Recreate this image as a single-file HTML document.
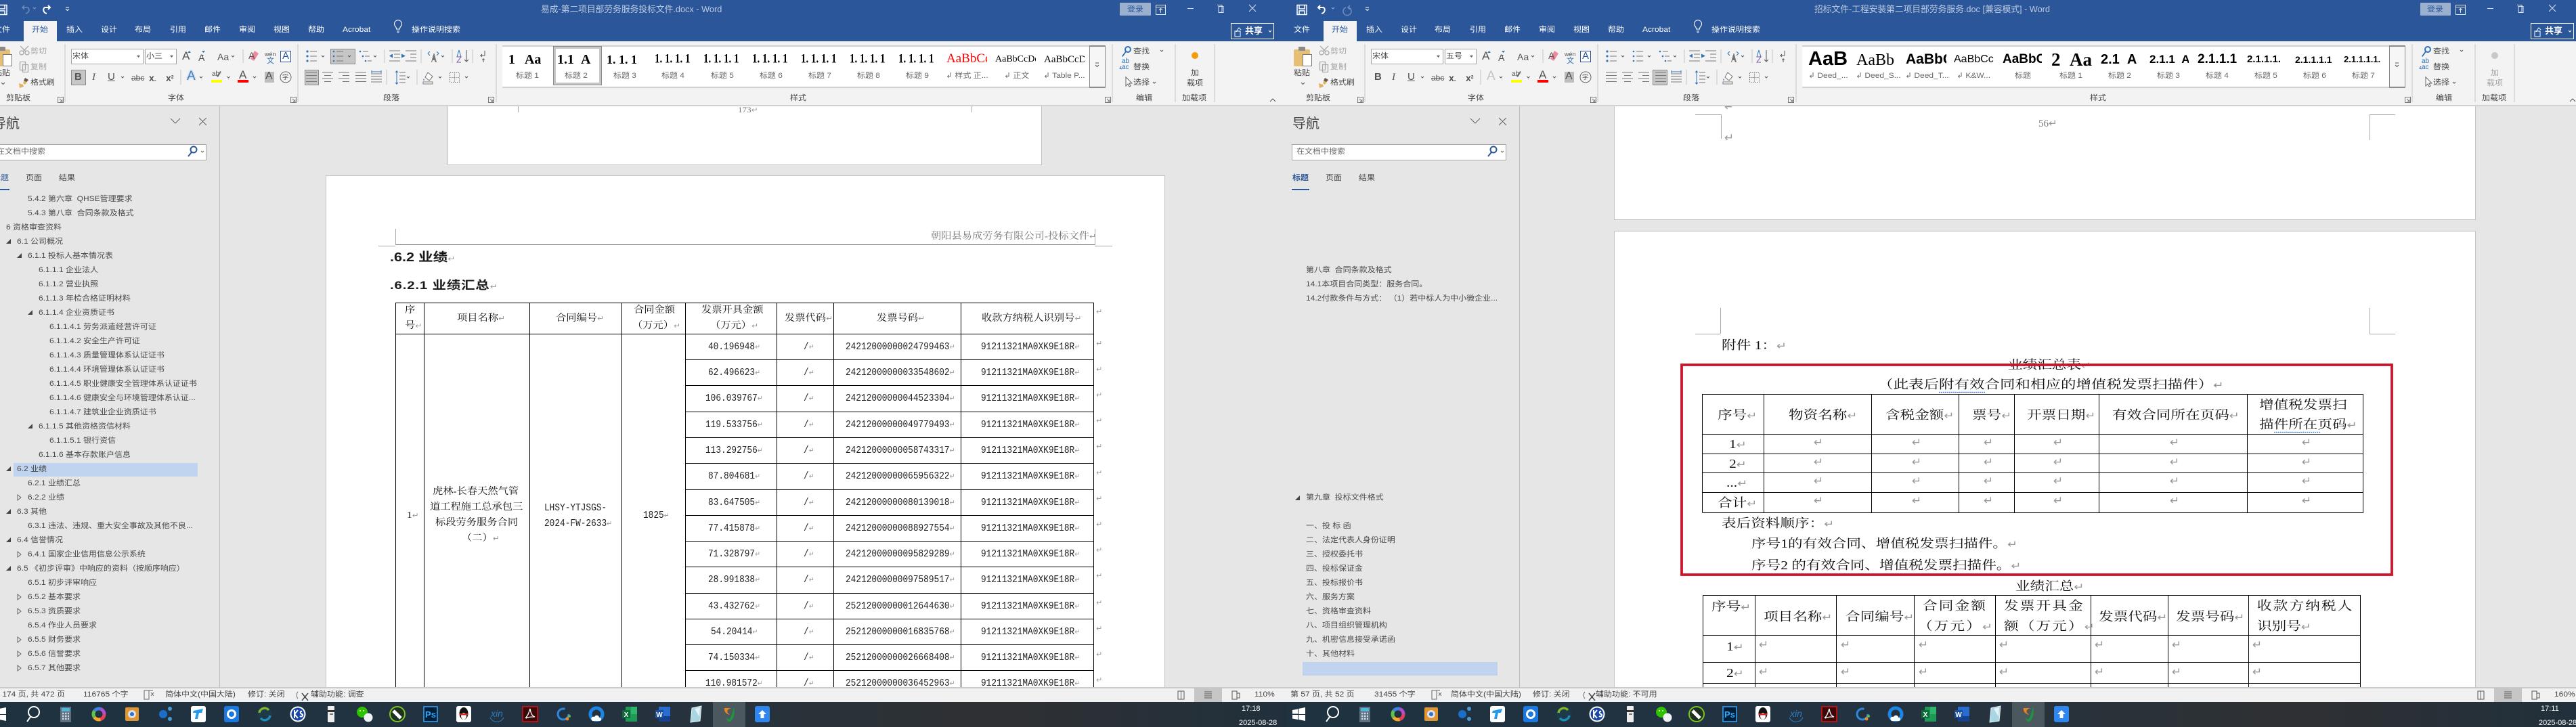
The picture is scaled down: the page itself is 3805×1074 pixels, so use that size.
<!DOCTYPE html>
<html lang="zh"><head><meta charset="utf-8"><title>Word</title>
<style>
html,body{margin:0;padding:0;background:#e6e6e6}
body{width:3805px;height:1074px;overflow:hidden;position:relative}
p{margin:0}
#L,#R{position:absolute;top:0;height:1074px;overflow:hidden;background:#e6e6e6}
#L{left:-20px;width:1920px}
#R{left:1900px;width:1905px}
#LD{position:absolute;left:20px;top:0;width:1900px;height:1074px}
#RD{position:absolute;left:-1900px;top:0;width:3805px;height:1074px}
.a{position:absolute;left:0;top:0;overflow:visible}
.pg{position:absolute;background:#fff;box-shadow:0 0 0 1px #c4c4c4}
.bar{position:absolute;left:0;top:0;width:1920px;height:61px;background:#2b579a}
.rb{position:absolute;left:0;top:61px;width:1920px;height:94px;background:#f3f3f3;border-bottom:2px solid #d2d2d2}
.tab{position:absolute;left:55px;top:31px;width:49px;height:30px;background:#f3f3f3}
.u{position:absolute;font:11px/16px "Liberation Sans","Noto Sans CJK SC",sans-serif;transform:scaleX(1.09);transform-origin:0 0;white-space:nowrap;color:#444}
.w{color:#fff}.dm{color:#a5a5a5}.bl{color:#2b579a}.tt{color:#bccadf}.gy{color:#6a6a6a}
.s13{font-size:13px}
.gl{position:absolute;left:762px;top:67px;width:867px;height:59px;background:#fff;border-top:2px solid #d0d0d0;border-bottom:2px solid #d0d0d0}
.sc{position:absolute;left:1629px;top:67px;width:22px;height:59px;border:1px solid #8a8a8a;border-width:2px 1px;background:#f6f6f6}
.g{position:absolute;top:75px;height:26px;width:60px;overflow:hidden;font:20px/26px "Liberation Serif",serif;color:#000;white-space:nowrap}
.gb{font:bold 21px/26px "Liberation Sans",sans-serif}
.gs{font-size:15px;font-weight:bold;transform:scaleY(1.25);transform-origin:50% 60%}
.box{position:absolute;background:#fff;border:1px solid #a6a6a6;box-sizing:border-box}
.k{position:absolute;font:13px/16px "Liberation Sans","Noto Sans CJK SC",sans-serif;color:#555;white-space:nowrap}
.sel{position:absolute;background:#c6c6c6;box-shadow:inset 0 0 0 1px #8a8a8a}
.st{position:absolute;left:0;top:1015px;width:1920px;height:22px;background:#f1f1f1;border-top:2px solid #cacaca;box-sizing:border-box}
.tk{position:absolute;left:0;top:1037px;width:1920px;height:37px;background:linear-gradient(90deg,#1e3240,#233241 45%,#2a3238 65%,#2f3033 78%,#20303c)}
.n{position:absolute;font:11px/16px "Liberation Sans","Noto Sans CJK SC",sans-serif;transform:scaleX(1.09);transform-origin:0 0;white-space:pre;color:#4a4a4a}
.d{position:absolute;font:14px/20px "Liberation Serif","Noto Serif CJK SC",serif;transform:scaleX(1.09);transform-origin:0 0;white-space:nowrap;color:#111}
.m{position:absolute;font:15px/20px "Liberation Mono",monospace;transform:scaleX(.853);transform-origin:0 0;white-space:nowrap;color:#222}
.e{position:absolute;font:18px/24px "Liberation Serif","Noto Serif CJK SC",serif;transform:scaleX(1.2);transform-origin:0 0;white-space:nowrap;color:#111}
.sp{letter-spacing:1.8px}
em{font:normal 11px "DejaVu Sans",sans-serif;color:#999;letter-spacing:0}
.e em{font-size:15px}
.r{position:absolute;font:normal 11px/20px "DejaVu Sans",sans-serif;color:#999}
.r2{position:absolute;font:normal 17px/20px "DejaVu Sans",sans-serif;color:#999}
.h1{position:absolute;font:bold 18px/24px "Liberation Sans","Noto Sans CJK SC",sans-serif;color:#1a1a1a;white-space:nowrap;transform:scaleX(1.2);transform-origin:0 0}
.ck{font:11px/14px "Liberation Sans","Noto Sans CJK SC",sans-serif;color:#fff;position:absolute;white-space:nowrap}
</style></head><body>
<svg width="0" height="0" style="position:absolute"><defs>
<g id="ri">
<path fill="none" stroke="#c6c6c6" d="M116 65V151M460 65V151M753 65V151M1663 65V151M1756 65V151M1814 65V151M379 73V93M287 103V125M588 73V93M642 73V93M688 73V93M718 73V93M591 103V125M636 103V125"/>
<path fill="none" stroke="#777" d="M105.5 143.5h8v8h-8zM108 146l4 4m0-3v3h-3M449.5 143.5h8v8h-8zM452 146l4 4m0-3v3h-3M741.5 143.5h8v8h-8zM744 146l4 4m0-3v3h-3M1652.5 143.5h8v8h-8zM1655 146l4 4m0-3v3h-3"/>
<path fill="none" stroke="#555" d="M22 122l2.500 2.500 2.500-2.500M362 82l2 2 2-2M495 82l2 2 2-2M534 82l2 2 2-2M572 82l2 2 2-2M672 82l2 2 2-2M199 113l2 2 2-2M315 113l2 2 2-2M355.500 113l2 2 2-2M394 113l2 2 2-2M621 113l2 2 2-2M668 113l2 2 2-2M707 113l2 2 2-2M1734 74l2 2 2-2M1723 121l2 2 2-2M1638 96l2.500 2.500 2.500-2.500M1638 93h5M1896 150l4-4 4 4"/>
<path fill="#555" d="M222 82h5l-2.500 3zM271 82h5l-2.500 3zM317 81h4l-2 2.500z"/>
<rect x="11" y="73" width="24" height="25" rx="2" fill="#e6bf76"/><rect x="18" y="69" width="10" height="6" rx="1" fill="#8a8a8a"/><rect x="24.500" y="80.500" width="13" height="17" fill="#fff" stroke="#777"/>
<g fill="none" stroke="#a9a9a9" stroke-width="1.300"><circle cx="52" cy="78" r="3"/><circle cx="60" cy="78" r="3"/><path d="M50 68l8 8M62 68l-8 8M49.500 91.500h8v12h-8zM53.500 95.500h8v11h-8z"/></g>
<path d="M57 115l5 3-5 7-3-2zM48 123l6 2 1 3-6 2z" fill="#e3b25e"/><path d="M57 115l5 3-3 3-4-2z" fill="#5a5a5a"/>
<path fill="#2f73b8" d="M297 78l2.500-3 2.500 3zM318 75l2.500 3 2.500-3z"/>
<path d="M396 75l6 4-7 11-5-3z" fill="#ea8a9c"/><rect x="434.500" y="75.500" width="15" height="16" fill="#fff" stroke="#2b579a"/>
<g stroke="#777" fill="none"><path d="M478 76h10M478 83h10M478 90h10M517 76h10M517 83h10M517 90h10M556 76h8M559 83h7M563 90h6M595 75h16M602 80h9M602 85h9M595 90h16M619 75h16M626 80h9M626 85h9M619 90h16"/>
<path d="M472 107h16M472 111.500h16M472 116h16M472 120.500h16M496 107h16M499 111.500h10M496 116h16M499 120.500h10M520 107h16M526 111.500h10M520 116h16M526 120.500h10M545 107h16M545 111.500h16M545 116h16M545 120.500h16M568 109h16M568 113h16M568 117h16M568 121h16M610 107h9M610 112h9M610 117h9M610 122h9M729 76h0"/></g>
<g fill="#2f73b8"><circle cx="474" cy="76" r="1.600"/><circle cx="474" cy="83" r="1.600"/><circle cx="474" cy="90" r="1.600"/><circle cx="513" cy="76" r="1.300"/><circle cx="513" cy="83" r="1.300"/><circle cx="513" cy="90" r="1.300"/><circle cx="552" cy="76" r="1.300"/><circle cx="556" cy="83" r="1.300"/><circle cx="560" cy="90" r="1.300"/><path d="M595 82.500l5-3v6zM613 79.500l6 3-6 3zM606 104l2.500 3h-5zM606 125l2.500-3h-5z"/></g>
<path fill="none" stroke="#2f73b8" d="M606 106V123M569 106h14M569 104v4M583 104v4M655 76l-3 3 3 3M665 76l3 3-3 3"/>
<path fill="#777" d="M657 92l3.500-13h1l3.500 13h-2l-1-3h-3l-1 3z"/>
<path fill="none" stroke="#2f73b8" d="M698 74l-3 10h6l-3-10"/><path fill="none" stroke="#7d4fa8" d="M695 84h6l-6 8h6"/><path fill="none" stroke="#555" d="M709 74V91M706 88l3 3 3-3M736 75v7h-6l2-2m-2 2l2 2M732 88h4M734 86v6"/>
<path d="M652 107l7 6-5 6-6-5z" fill="#fff" stroke="#777"/><path d="M646 116c-3 4 3 4 0 0" fill="#5a8fc6"/><rect x="645" y="121" width="14" height="3" fill="#fff" stroke="#777"/>
<rect x="684.500" y="107.500" width="14" height="14" fill="none" stroke="#777" stroke-dasharray="1.500 1.500"/><path stroke="#777" stroke-dasharray="1.500 1.500" d="M691.500 107v14M684 114.500h15"/>
<rect x="332" y="118" width="16" height="4" fill="#ff0"/><rect x="371" y="118" width="16" height="4" fill="#f00"/><path d="M347 106l-5 8-2-1 5-8z" fill="#777"/>
<rect x="411" y="106" width="14" height="16" fill="#bdbdbd"/><circle cx="442" cy="114" r="8" fill="none" stroke="#666"/>
<path fill="none" stroke="#fff" d="M604 39a5.500 5.500 0 1 1 8 0c-1 1-1.500 2-1.500 4h-5c0-2-.500-3-1.500-4zM606 46h4M606.500 48h3"/>
<path fill="none" stroke="#dfe6f1" d="M1727.500 7.500h14v14h-14zM1727 10.500h15M1734.500 19v-6M1732 15l2.500-2.500 2.500 2.500M1774 12.500h9M1818 7.500h7v9h-2M1820 9.500h7v9h-7zM1865 7l10 10M1875 7l-10 10"/>
<rect x="1838.500" y="34.500" width="63" height="23" fill="none" stroke="#fff"/>
<path fill="none" stroke="#fff" d="M1844 46h8v8h-8zM1846 47l4-6 3 3M1894 45l2 2 2-2"/>
<path fill="#2f73b8" d="M1682 76l-5 7 1.500 1 5-7z"/><circle cx="1686" cy="73" r="4" fill="none" stroke="#2f73b8" stroke-width="2"/>
<path fill="#fff" stroke="#666" d="M1683 114v13l3-3 2 4 2-1-2-4h4z"/><path d="M1676 98l-2 3 3 1" fill="none" stroke="#2f73b8"/>
<path fill="none" stroke="#666" d="M272 175l7 7 7-7M314 174l11 11m0-11l-11 11M317 223l2 2 2-2"/>
<circle cx="306" cy="221" r="4.500" fill="none" stroke="#2b579a" stroke-width="2"/><path stroke="#2b579a" stroke-width="2" d="M303 225l-5 6"/>
</g>
<g id="tb">
<g transform="translate(25 18)" fill="#fff"><path d="M-9-6l8-1.500v7h-8zM0-8l10-2v10H0zM-9 1h8v7l-8-1.500zM0 1h10v9L0 8z"/></g>
<g transform="translate(74 18)" fill="none" stroke="#fff" stroke-width="2"><circle cx="2" cy="-3" r="8"/><path d="M-3 4l-5 7"/></g>
<g transform="translate(123 18)"><rect x="-8" y="-11" width="16" height="23" fill="#5d6f80"/><rect x="-6" y="-9" width="12" height="5" fill="#4fb8d8"/><path stroke="#cfd8de" stroke-width="2.500" stroke-dasharray="2.500 1.500" d="M-5-1h10M-5 3h10M-5 7h10"/></g>
<g transform="translate(172 18)" fill="none" stroke-width="5"><circle r="8" stroke="#e6405f" stroke-dasharray="10 40"/><circle r="8" stroke="#f7a823" stroke-dasharray="10 40" stroke-dashoffset="-10"/><circle r="8" stroke="#5fc14a" stroke-dasharray="10 40" stroke-dashoffset="-20"/><circle r="8" stroke="#3f7fe0" stroke-dasharray="10 40" stroke-dashoffset="-30"/><circle r="8" stroke="#b04fd0" stroke-dasharray="10 40" stroke-dashoffset="-40"/></g>
<g transform="translate(221 18)"><rect x="-10" y="-10" width="20" height="20" rx="2" fill="#e5952f"/><circle r="6" fill="#d5e2ee"/><circle r="3" fill="#3d6fc0"/></g>
<g transform="translate(270 18)"><circle cx="-3" r="6" fill="#1c6fc8"/><circle cx="7" cy="-8" r="3" fill="#4a9ad6"/><circle cx="7" cy="7" r="3" fill="#4a9ad6"/></g>
<g transform="translate(319 18)"><rect x="-11" y="-12" width="22" height="24" rx="3" fill="#fff"/><path d="M-7-5l14-3-2 6h-4l-2 9h-4l2-9h-5z" fill="#1f9af0"/></g>
<g transform="translate(368 18)"><rect x="-11" y="-12" width="22" height="24" rx="3" fill="#1a78e0"/><circle r="5.500" fill="none" stroke="#fff" stroke-width="3"/></g>
<g transform="translate(417 18)" fill="none" stroke-width="3.500"><circle r="11" fill="#1e3a48" stroke="none"/><path stroke="#7fb52a" d="M-8-2a8 8 0 0 1 14-4"/><path stroke="#1a8cb8" d="M8 2a8 8 0 0 1-14 4"/></g>
<g transform="translate(466 18)"><circle r="11.500" fill="#fff"/><circle r="9.500" fill="#1a48a8"/><path fill="none" stroke="#fff" stroke-width="2" d="M-5-6v12M-5 0l5-6M-5 0l5 6M6-4c-3-1-3 3 0 4s0 5-3 3"/></g>
<g transform="translate(515 18)"><rect x="-5" y="-12" width="10" height="24" rx="1" fill="#ededed"/><rect x="-5" y="-6" width="10" height="3" fill="#333"/><rect x="-2" y="-1" width="5" height="2" fill="#777"/></g>
<g transform="translate(564 18)"><circle cx="-3" cy="-3" r="8" fill="#2dc100"/><circle cx="6" cy="5" r="6.500" fill="#eef2f4"/><circle cx="-6" cy="-5" r="1" fill="#fff"/><circle cx="-1" cy="-5" r="1" fill="#fff"/></g>
<g transform="translate(613 18)"><circle r="11" fill="#1f2f22" stroke="#7ac520" stroke-width="2"/><path d="M-6-5l11 11" stroke="#fff" stroke-width="5"/></g>
<g transform="translate(662 18)"><rect x="-10" y="-11" width="20" height="22" fill="#001e36" stroke="#31a8ff" stroke-width="1.500"/><text x="0" y="5" text-anchor="middle" font-family="Liberation Sans" font-weight="bold" font-size="13" fill="#31a8ff">Ps</text></g>
<g transform="translate(711 18)"><rect x="-11" y="-12" width="22" height="24" rx="3" fill="#fff"/><ellipse cy="-1" rx="6.500" ry="9" fill="#111"/><ellipse cy="3" rx="4" ry="5" fill="#fff"/><rect x="-6" y="-1" width="12" height="2.500" fill="#d8221c"/></g>
<g transform="translate(760 18)"><text x="0" y="4" text-anchor="middle" font-family="Liberation Sans" font-style="italic" font-size="14" fill="#2d7dc0">xin</text><path d="M-10 5a11 11 0 0 0 20 0" fill="none" stroke="#2d7dc0"/></g>
<g transform="translate(809 18)"><rect x="-11" y="-11" width="22" height="22" fill="#3a0a0a" stroke="#e01010" stroke-width="1.500"/><path d="M0-8c-2 6-3 10-7 14M0-8c1 7 3 11 7 12-5 0-9 0-13 2" fill="none" stroke="#fff" stroke-width="1.300"/></g>
<g transform="translate(858 18)"><circle r="8" fill="none" stroke="#2a8ae0" stroke-width="3" stroke-dasharray="40 10"/><circle cx="6" cy="7" r="2.500" fill="#e8862a"/><circle cx="9" cy="3" r="2" fill="#5fb84a"/></g>
<g transform="translate(907 18)"><circle r="9" fill="none" stroke="#1a86e8" stroke-width="5"/><path d="M-6 10c-4-4 0-7 3-6 2-4 7-2 7 1 4 0 4 5 1 5z" fill="#fff"/></g>
<g transform="translate(956 18)"><rect x="-6" y="-11" width="17" height="22" fill="#1f9a54"/><rect x="2" y="-11" width="9" height="11" fill="#30b56d"/><rect x="-11" y="-6" width="12" height="12" fill="#0e6b3a"/><text x="-5" y="4" text-anchor="middle" font-family="Liberation Sans" font-weight="bold" font-size="10" fill="#fff">X</text></g>
<g transform="translate(1005 18)"><rect x="-6" y="-11" width="17" height="22" fill="#2b6cd0"/><rect x="-6" y="3" width="17" height="8" fill="#16418f"/><rect x="-11" y="-6" width="12" height="12" fill="#1a4ea0"/><text x="-5" y="4" text-anchor="middle" font-family="Liberation Sans" font-weight="bold" font-size="10" fill="#fff">W</text></g>
<g transform="translate(1054 18)"><path d="M-6-9L8-12 6 10-8 12z" fill="#a9d6e3" stroke="#e8f4f7"/><path d="M-2-8L6-10 5 4z" fill="#e5f2f6"/></g>
<g transform="translate(1103 18)"><rect x="-24" y="-18" width="48" height="37" fill="#4b595f"/><path d="M-7-9h10c-4 1-7 4-5 7l3 3c-5-1-9-5-8-10z" fill="#e8841f"/><path d="M7-10c2 8 0 17-5 21-4 1-6-3-6-6 2 3 5 3 6 0 2-4 3-9 5-15z" fill="#1f9440"/></g>
<g transform="translate(1152 18)"><rect x="-11" y="-12" width="22" height="24" rx="3" fill="#2f86ee"/><path d="M0-6l6 6h-3.500v6h-5v-6H-6z" fill="#fff"/></g>
</g>
</defs></svg>

<div id="L">
<div id="LD">
<div class="pg" style="left:662px;top:156px;width:876px;height:87px"></div>
<div class="pg" style="left:482px;top:260px;width:1238px;height:760px"></div>
<svg class="a" width="1900" height="1074" shape-rendering="crispEdges"><path fill="none" stroke="#a8a8a8" d="M765.500 156V166M1435.500 156V166M584.500 338V362M559 363.500H584M1617.500 338V362M1617 363.500H1643"/><path fill="none" stroke="#7f7f7f" d="M585 361.500H1617"/>
<path fill="none" stroke="#000" d="M584.500 447.500H1615.500M584.500 493.500H1615.500M1012 531.500H1615.500M1012 569.500H1615.500M1012 608.500H1615.500M1012 646.500H1615.500M1012 684.500H1615.500M1012 723.500H1615.500M1012 761.500H1615.500M1012 799.500H1615.500M1012 837.500H1615.500M1012 876.500H1615.500M1012 914.500H1615.500M1012 952.500H1615.500M1012 990.500H1615.500M584.500 447V1015M626.500 447V1015M782.500 447V1015M918.500 447V1015M1012.500 447V1015M1147.500 447V1015M1231.500 447V1015M1419.500 447V1015M1615.500 447V1015"/></svg>
<p class="d" style="left:1090px;top:152px;color:#777;font-size:12px">173<em>↵</em></p>
<p class="d" style="left:1375px;top:340px;color:#777">朝阳县易成劳务有限公司-投标文件<em>↵</em></p>
<p class="h1" style="left:576px;top:368px">.6.2 业绩<em>↵</em></p>
<p class="h1" style="left:576px;top:410px;font-size:17px;letter-spacing:.7px">.6.2.1 业绩汇总<em>↵</em></p>
<p class="d" style="left:598px;top:449px">序</p><p class="d" style="left:598px;top:472px">号<em>↵</em></p>
<p class="d" style="left:675px;top:461px">项目名称<em>↵</em></p><p class="d" style="left:821px;top:461px">合同编号<em>↵</em></p>
<p class="d" style="left:936px;top:449px">合同金额</p><p class="d" style="left:934px;top:472px">（万元）<em>↵</em></p>
<p class="d" style="left:1036px;top:449px">发票开具金额</p><p class="d" style="left:1049px;top:472px">（万元）<em>↵</em></p>
<p class="d" style="left:1159px;top:461px">发票代码<em>↵</em></p><p class="d" style="left:1295px;top:461px">发票号码<em>↵</em></p><p class="d" style="left:1450px;top:461px">收款方纳税人识别号<em>↵</em></p>
<p class="d" style="left:601px;top:752px">1<em>↵</em></p>
<p class="d" style="left:639px;top:717px">虎林-长春天然气管</p><p class="d" style="left:635px;top:740px">道工程施工总承包三</p><p class="d" style="left:643px;top:763px">标段劳务服务合同</p><p class="d" style="left:682px;top:786px">（二）<em>↵</em></p>
<p class="m" style="left:804px;top:741px">LHSY-YTJSGS-</p><p class="m" style="left:804px;top:764px">2024-FW-2633<em>↵</em></p>
<p class="m" style="left:950px;top:752px">1825<em>↵</em></p>
<p class="m" style="left:1046px;top:503px">40.196948<em>↵</em></p><p class="m" style="left:1187px;top:503px">/<em>↵</em></p><p class="m" style="left:1249px;top:503px">24212000000024799463<em>↵</em></p><p class="m" style="left:1449px;top:503px">91211321MA0XK9E18R<em>↵</em></p>
<p class="m" style="left:1046px;top:541px">62.496623<em>↵</em></p><p class="m" style="left:1187px;top:541px">/<em>↵</em></p><p class="m" style="left:1249px;top:541px">24212000000033548602<em>↵</em></p><p class="m" style="left:1449px;top:541px">91211321MA0XK9E18R<em>↵</em></p>
<p class="m" style="left:1042px;top:579px">106.039767<em>↵</em></p><p class="m" style="left:1187px;top:579px">/<em>↵</em></p><p class="m" style="left:1249px;top:579px">24212000000044523304<em>↵</em></p><p class="m" style="left:1449px;top:579px">91211321MA0XK9E18R<em>↵</em></p>
<p class="m" style="left:1042px;top:618px">119.533756<em>↵</em></p><p class="m" style="left:1187px;top:618px">/<em>↵</em></p><p class="m" style="left:1249px;top:618px">24212000000049779493<em>↵</em></p><p class="m" style="left:1449px;top:618px">91211321MA0XK9E18R<em>↵</em></p>
<p class="m" style="left:1042px;top:656px">113.292756<em>↵</em></p><p class="m" style="left:1187px;top:656px">/<em>↵</em></p><p class="m" style="left:1249px;top:656px">24212000000058743317<em>↵</em></p><p class="m" style="left:1449px;top:656px">91211321MA0XK9E18R<em>↵</em></p>
<p class="m" style="left:1046px;top:694px">87.804681<em>↵</em></p><p class="m" style="left:1187px;top:694px">/<em>↵</em></p><p class="m" style="left:1249px;top:694px">24212000000065956322<em>↵</em></p><p class="m" style="left:1449px;top:694px">91211321MA0XK9E18R<em>↵</em></p>
<p class="m" style="left:1046px;top:733px">83.647505<em>↵</em></p><p class="m" style="left:1187px;top:733px">/<em>↵</em></p><p class="m" style="left:1249px;top:733px">24212000000080139018<em>↵</em></p><p class="m" style="left:1449px;top:733px">91211321MA0XK9E18R<em>↵</em></p>
<p class="m" style="left:1046px;top:771px">77.415878<em>↵</em></p><p class="m" style="left:1187px;top:771px">/<em>↵</em></p><p class="m" style="left:1249px;top:771px">24212000000088927554<em>↵</em></p><p class="m" style="left:1449px;top:771px">91211321MA0XK9E18R<em>↵</em></p>
<p class="m" style="left:1046px;top:809px">71.328797<em>↵</em></p><p class="m" style="left:1187px;top:809px">/<em>↵</em></p><p class="m" style="left:1249px;top:809px">24212000000095829289<em>↵</em></p><p class="m" style="left:1449px;top:809px">91211321MA0XK9E18R<em>↵</em></p>
<p class="m" style="left:1046px;top:847px">28.991838<em>↵</em></p><p class="m" style="left:1187px;top:847px">/<em>↵</em></p><p class="m" style="left:1249px;top:847px">24212000000097589517<em>↵</em></p><p class="m" style="left:1449px;top:847px">91211321MA0XK9E18R<em>↵</em></p>
<p class="m" style="left:1046px;top:886px">43.432762<em>↵</em></p><p class="m" style="left:1187px;top:886px">/<em>↵</em></p><p class="m" style="left:1249px;top:886px">25212000000012644630<em>↵</em></p><p class="m" style="left:1449px;top:886px">91211321MA0XK9E18R<em>↵</em></p>
<p class="m" style="left:1050px;top:924px">54.20414<em>↵</em></p><p class="m" style="left:1187px;top:924px">/<em>↵</em></p><p class="m" style="left:1249px;top:924px">25212000000016835768<em>↵</em></p><p class="m" style="left:1449px;top:924px">91211321MA0XK9E18R<em>↵</em></p>
<p class="m" style="left:1046px;top:962px">74.150334<em>↵</em></p><p class="m" style="left:1187px;top:962px">/<em>↵</em></p><p class="m" style="left:1249px;top:962px">25212000000026668408<em>↵</em></p><p class="m" style="left:1449px;top:962px">91211321MA0XK9E18R<em>↵</em></p>
<p class="m" style="left:1042px;top:1000px">110.981572<em>↵</em></p><p class="m" style="left:1187px;top:1000px">/<em>↵</em></p><p class="m" style="left:1249px;top:1000px">25212000000036452963<em>↵</em></p><p class="m" style="left:1449px;top:1000px">91211321MA0XK9E18R<em>↵</em></p>
<p class="r" style="left:1619px;top:451px">↵</p><p class="r" style="left:1619px;top:498px">↵</p><p class="r" style="left:1619px;top:536px">↵</p><p class="r" style="left:1619px;top:574px">↵</p><p class="r" style="left:1619px;top:612px">↵</p><p class="r" style="left:1619px;top:650px">↵</p><p class="r" style="left:1619px;top:689px">↵</p><p class="r" style="left:1619px;top:727px">↵</p><p class="r" style="left:1619px;top:765px">↵</p><p class="r" style="left:1619px;top:803px">↵</p><p class="r" style="left:1619px;top:841px">↵</p><p class="r" style="left:1619px;top:881px">↵</p><p class="r" style="left:1619px;top:919px">↵</p><p class="r" style="left:1619px;top:957px">↵</p><p class="r" style="left:1619px;top:995px">↵</p>
</div>

<div style="position:absolute;left:0;top:156px;width:344px;height:859px;background:#e6e6e6;border-right:1px solid #bdbdbd"></div>
<div class="box" style="left:8px;top:213px;width:317px;height:24px;border-width:1.500px"></div>
<div style="position:absolute;left:8px;top:279px;width:26px;height:2px;background:#2b579a"></div>
<p class="u" style="left:9px;top:171px;font-size:20px;line-height:24px;transform:scaleX(1)">导航</p>
<p class="u gy" style="left:15px;top:216px">在文档中搜索</p>
<p class="u bl" style="left:9px;top:255px">标题</p><p class="u" style="left:58px;top:255px">页面</p><p class="u" style="left:107px;top:255px">结果</p>
<div id="LN" style="position:absolute;left:20px;top:0">
<div style="position:absolute;left:20px;top:684px;width:272px;height:20px;background:#c0d4f0"></div>
<svg class="a" width="340" height="1074"><path fill="#444" d="M9 360h7v-7zM9 696h7v-7zM9 759h7v-7zM9 801h7v-7zM9 843h7v-7zM25 381h7v-7zM41 465h7v-7zM41 633h7v-7z"/><path fill="none" stroke="#666" d="M26 731v8l5-4zM26 815v8l5-4zM26 878v8l5-4zM26 899v8l5-4zM26 941v8l5-4zM26 962v8l5-4zM26 983v8l5-4z"/></svg>
<p class="n" style="left:41px;top:286px">5.4.2 第六章  QHSE管理要求</p>
<p class="n" style="left:41px;top:307px">5.4.3 第八章  合同条款及格式</p>
<p class="n" style="left:9px;top:328px">6 资格审查资料</p>
<p class="n" style="left:25px;top:349px">6.1 公司概况</p>
<p class="n" style="left:41px;top:370px">6.1.1 投标人基本情况表</p>
<p class="n" style="left:57px;top:391px">6.1.1.1 企业法人</p>
<p class="n" style="left:57px;top:412px">6.1.1.2 营业执照</p>
<p class="n" style="left:57px;top:433px">6.1.1.3 年检合格证明材料</p>
<p class="n" style="left:57px;top:454px">6.1.1.4 企业资质证书</p>
<p class="n" style="left:73px;top:475px">6.1.1.4.1 劳务派遣经营许可证</p>
<p class="n" style="left:73px;top:496px">6.1.1.4.2 安全生产许可证</p>
<p class="n" style="left:73px;top:517px">6.1.1.4.3 质量管理体系认证证书</p>
<p class="n" style="left:73px;top:538px">6.1.1.4.4 环境管理体系认证证书</p>
<p class="n" style="left:73px;top:559px">6.1.1.4.5 职业健康安全管理体系认证证书</p>
<p class="n" style="left:73px;top:580px">6.1.1.4.6 健康安全与环境管理体系认证...</p>
<p class="n" style="left:73px;top:601px">6.1.1.4.7 建筑业企业资质证书</p>
<p class="n" style="left:57px;top:622px">6.1.1.5 其他资格资信材料</p>
<p class="n" style="left:73px;top:643px">6.1.1.5.1 银行资信</p>
<p class="n" style="left:57px;top:664px">6.1.1.6 基本存款账户信息</p>
<p class="n" style="left:25px;top:685px">6.2 业绩</p>
<p class="n" style="left:41px;top:706px">6.2.1 业绩汇总</p>
<p class="n" style="left:41px;top:727px">6.2.2 业绩</p>
<p class="n" style="left:25px;top:748px">6.3 其他</p>
<p class="n" style="left:41px;top:769px">6.3.1 违法、违规、重大安全事故及其他不良...</p>
<p class="n" style="left:25px;top:790px">6.4 信誉情况</p>
<p class="n" style="left:41px;top:811px">6.4.1 国家企业信用信息公示系统</p>
<p class="n" style="left:25px;top:832px">6.5 《初步评审》中响应的资料（按顺序响应）</p>
<p class="n" style="left:41px;top:853px">6.5.1 初步评审响应</p>
<p class="n" style="left:41px;top:874px">6.5.2 基本要求</p>
<p class="n" style="left:41px;top:895px">6.5.3 资质要求</p>
<p class="n" style="left:41px;top:916px">6.5.4 作业人员要求</p>
<p class="n" style="left:41px;top:937px">6.5.5 财务要求</p>
<p class="n" style="left:41px;top:958px">6.5.6 信誉要求</p>
<p class="n" style="left:41px;top:979px">6.5.7 其他要求</p>
</div>

<div class="bar"></div><div class="rb"></div><div class="tab"></div>
<div class="gl"></div><div class="sc"></div>
<div class="sel" style="left:125px;top:103px;width:22px;height:23px"></div>
<div class="sel" style="left:470px;top:103px;width:21px;height:23px"></div>
<div class="sel" style="left:508px;top:72px;width:37px;height:23px"></div>
<div style="position:absolute;left:837px;top:68px;width:70px;height:56px;background:#fff;border:1px solid #8a8a8a;box-shadow:inset 0 0 0 3px #c6c6c6"></div>
<svg class="a" width="1920" height="155"><use href="#ri"/>
<circle cx="1785" cy="82" r="5" fill="#f59a0a"/>
<path fill="none" stroke="#fff" stroke-width="1.500" d="M16 7.500h14v14H16zM19 8v5h8V8M19 21v-5h8v5"/>
<path fill="none" stroke="#6f8ebb" stroke-width="1.500" d="M56 8l-3 3 3 3M53 11h7c4 0 4 8-2 9M69 11l2 2 2-2"/><path fill="none" stroke="#fff" stroke-width="2" d="M91 8l3 3-3 3M94 11h-7c-4 0-4 8 2 9"/><path fill="none" stroke="#fff" d="M117 11h5M117 13l2.500 2.500 2.500-2.500"/></svg>
<p class="u tt s13" style="left:819px;top:6px;transform:scaleX(.98)">易成-第二项目部劳务服务投标文件.docx  -  Word</p>
<p class="u w" style="left:11px;top:36px">文件</p><p class="u bl" style="left:67px;top:36px">开始</p><p class="u w" style="left:118px;top:36px">插入</p><p class="u w" style="left:169px;top:36px">设计</p><p class="u w" style="left:219px;top:36px">布局</p><p class="u w" style="left:271px;top:36px">引用</p><p class="u w" style="left:322px;top:36px">邮件</p><p class="u w" style="left:373px;top:36px">审阅</p><p class="u w" style="left:424px;top:36px">视图</p><p class="u w" style="left:475px;top:36px">帮助</p><p class="u w" style="left:526px;top:36px">Acrobat</p><p class="u w" style="left:628px;top:36px">操作说明搜索</p>
<div style="position:absolute;left:1674px;top:4px;width:46px;height:19px;background:#9bb0cf;border-radius:1px"></div><p class="u bl" style="left:1685px;top:6px">登录</p>
<p class="u w s13" style="left:1859px;top:38px;font-weight:bold;transform:scaleX(1)">共享</p>
<p class="u" style="left:11px;top:100px">粘贴</p><p class="u dm" style="left:65px;top:68px">剪切</p><p class="u dm" style="left:65px;top:91px">复制</p><p class="u" style="left:65px;top:114px">格式刷</p><p class="u" style="left:29px;top:137px">剪贴板</p>
<div class="box" style="left:125px;top:72px;width:107px;height:23px"></div><div class="box" style="left:234px;top:72px;width:47px;height:23px"></div>
<svg class="a" width="300" height="100"><path fill="#555" d="M222 82h5l-2.500 3zM271 82h5l-2.500 3z"/></svg>
<p class="u" style="left:127px;top:75px">宋体</p><p class="u" style="left:236px;top:75px">小三</p>
<p class="k" style="left:289px;top:75px;font-size:17px">A</p><p class="k" style="left:313px;top:77px;font-size:14px">A</p><p class="k" style="left:341px;top:76px;font-size:14px">Aa</p><p class="k" style="left:387px;top:74px;font-size:14px">A</p><p class="k" style="left:411px;top:72px;font-size:9px">wén</p><p class="k" style="left:414px;top:82px;font-size:11px;color:#2b6fb3">文</p><p class="k" style="left:437px;top:75px;font-size:15px;color:#2b579a">A</p>
<p class="k" style="left:130px;top:106px;font-size:15px;font-weight:bold">B</p><p class="k" style="left:156px;top:106px;font:italic 15px/16px 'Liberation Serif',serif">I</p><p class="k" style="left:179px;top:106px;font-size:15px;text-decoration:underline">U</p><p class="k" style="left:214px;top:107px;font-size:12px;text-decoration:line-through">abc</p><p class="k" style="left:240px;top:107px;font-size:14px;font-weight:bold">x<span style="font-size:7px">₂</span></p><p class="k" style="left:265px;top:107px;font-size:14px;font-weight:bold">x<span style="font-size:7px;vertical-align:4px">2</span></p>
<p class="k" style="left:296px;top:105px;font-size:19px;color:#4a7ebb;text-shadow:0 0 3px #9cc0e8">A</p><p class="k" style="left:333px;top:102px;font-size:10px">ab</p><p class="k" style="left:373px;top:103px;font-size:17px">A</p><p class="k" style="left:412px;top:105px;font-size:16px">A</p><p class="k" style="left:437px;top:106px;font-size:9px">字</p>
<p class="u" style="left:268px;top:137px">字体</p><p class="u" style="left:586px;top:137px">段落</p><p class="u" style="left:1187px;top:137px">样式</p><p class="u" style="left:1698px;top:137px">编辑</p><p class="u" style="left:1766px;top:137px">加载项</p>
<p class="g" style="left:771px;font-weight:bold">1 &nbsp; Aa</p><p class="g" style="left:843px;font-weight:bold">1.1 &nbsp;A</p><p class="g" style="left:916px;font-size:18px;font-weight:bold">1. 1. 1</p>
<p class="g gs" style="left:987px">1. 1. 1. 1</p><p class="g gs" style="left:1059px">1. 1. 1. 1</p><p class="g gs" style="left:1131px">1. 1. 1. 1</p><p class="g gs" style="left:1203px">1. 1. 1. 1</p><p class="g gs" style="left:1275px">1. 1. 1. 1</p><p class="g gs" style="left:1347px">1. 1. 1. 1</p>
<p class="g" style="left:1418px;color:#f00;font-size:19px;top:74px">AaBbCc</p><p class="g" style="left:1490px;font-size:14px">AaBbCcDdE</p><p class="g" style="left:1562px;font-size:15px">AaBbCcDd</p>
<p class="u gy" style="left:782px;top:104px">标题 1</p><p class="u gy" style="left:854px;top:104px">标题 2</p><p class="u gy" style="left:926px;top:104px">标题 3</p><p class="u gy" style="left:997px;top:104px">标题 4</p><p class="u gy" style="left:1070px;top:104px">标题 5</p><p class="u gy" style="left:1142px;top:104px">标题 6</p><p class="u gy" style="left:1214px;top:104px">标题 7</p><p class="u gy" style="left:1286px;top:104px">标题 8</p><p class="u gy" style="left:1358px;top:104px">标题 9</p><p class="u gy" style="left:1417px;top:104px">↲ 样式 正...</p><p class="u gy" style="left:1503px;top:104px">↲ 正文</p><p class="u gy" style="left:1561px;top:104px">↲ Table P...</p>
<p class="u" style="left:1694px;top:68px">查找</p><p class="u" style="left:1694px;top:91px">替换</p><p class="u" style="left:1694px;top:114px">选择</p>
<p class="k" style="left:1677px;top:86px;font-size:10px;line-height:9px;color:#2b6fb3">ab<br>ac</p>
<p class="u" style="left:1779px;top:100px">加</p><p class="u" style="left:1773px;top:115px">载项</p>

<div class="st"></div>
<p class="u" style="left:8px;top:1018px">第 174 页, 共 472 页</p><p class="u" style="left:143px;top:1018px">116765 个字</p><p class="u" style="left:264px;top:1018px">简体中文(中国大陆)</p><p class="u" style="left:386px;top:1018px">修订: 关闭</p><p class="u" style="left:479px;top:1018px">辅助功能: 调查</p>
<svg class="a" width="1920" height="1074"><path fill="none" stroke="#666" d="M233 1020h7v13h-7zM240 1020h6M243 1023l4 5m0-5l-4 5M460 1022a8 8 0 0 0 0 10"/><path stroke="#444" stroke-width="1.500" d="M466 1024l9 11m0-11l-9 11"/><rect x="1784" y="1016" width="41" height="21" fill="#c6c6c6"/><path fill="none" stroke="#555" d="M1760 1021h9v12h-9zM1764.500 1021v12M1799 1022h11M1799 1025h11M1799 1028h11M1799 1031h11M1840 1021h7v12h-7zM1847 1024h4v7h-4"/></svg>
<p class="u" style="left:1873px;top:1018px">110%</p>
<div class="tk"></div>
<svg class="a" style="left:-6px;top:1037px" width="1300" height="37"><use href="#tb"/></svg>
<p class="ck" style="left:1854px;top:1040px">17:18</p><p class="ck" style="left:1850px;top:1061px">2025-08-28</p>
</div>

<div id="R">
<div id="RD">
<div class="pg" style="left:2385px;top:156px;width:1271px;height:168px"></div>
<div class="pg" style="left:2385px;top:342px;width:1271px;height:680px"></div>
<svg class="a" width="3805" height="1074" shape-rendering="crispEdges"><path fill="none" stroke="#a8a8a8" d="M2504 169.500H2542M2542.500 169V205M3500.500 169V207M3500 169.500H3538M2504 493.500H2541M2541.500 455V493M3500.500 455V493M3500 493.500H3538"/>
<path fill="none" stroke="#000" d="M2514.500 582.500H3491M2514.500 641.500H3491M2514.500 670.500H3491M2514.500 698.500H3491M2514.500 727.500H3491M2514.500 757.500H3491M2514.500 582V757M2605.500 582V757M2764.500 582V757M2893.500 582V757M2975.500 582V757M3100.500 582V757M3319.500 582V757M3490.500 582V757M2515 879.500H3486M2515 938.500H3486M2515 978.500H3486M2515 1009.500H3486M2515.500 879V1015M2592.500 879V1015M2712.500 879V1015M2827.500 879V1015M2947.500 879V1015M3088.500 879V1015M3202.500 879V1015M3321.500 879V1015M3486.500 879V1015"/></svg>
<p class="r2" style="left:2547px;top:148px">↵</p><p class="r2" style="left:2547px;top:194px">↵</p>
<p class="e" style="left:3011px;top:171px;color:#777;font-size:15px;transform:scaleX(1)">56<em>↵</em></p>
<p class="e" style="left:2543px;top:498px">附件 1：<em>↵</em></p>
<p class="e" style="left:2966px;top:527px">业绩汇总表<em>↵</em></p>
<p class="e" style="left:2774px;top:556px;transform:scaleX(1.25)">（此表后附有效合同和相应的增值税发票扫描件）<em>↵</em></p>
<p class="e" style="left:2537px;top:601px">序号<em>↵</em></p><p class="e" style="left:2642px;top:601px">物资名称<em>↵</em></p><p class="e" style="left:2785px;top:601px">含税金额<em>↵</em></p><p class="e" style="left:2913px;top:601px">票号<em>↵</em></p><p class="e" style="left:2994px;top:601px">开票日期<em>↵</em></p><p class="e" style="left:3120px;top:601px">有效合同所在页码<em>↵</em></p><p class="e" style="left:3337px;top:586px">增值税发票扫</p><p class="e" style="left:3337px;top:615px">描件所在页码<em>↵</em></p>
<p class="e" style="left:2554px;top:644px">1<em>↵</em></p><p class="e" style="left:2554px;top:673px">2<em>↵</em></p><p class="e" style="left:2550px;top:701px">...<em>↵</em></p><p class="e" style="left:2537px;top:731px">合计<em>↵</em></p>
<p class="r2" style="left:2679px;top:644px">↵</p><p class="r2" style="left:2824px;top:644px">↵</p><p class="r2" style="left:2930px;top:644px">↵</p><p class="r2" style="left:3033px;top:644px">↵</p><p class="r2" style="left:3205px;top:644px">↵</p><p class="r2" style="left:3400px;top:644px">↵</p>
<p class="r2" style="left:2679px;top:673px">↵</p><p class="r2" style="left:2824px;top:673px">↵</p><p class="r2" style="left:2930px;top:673px">↵</p><p class="r2" style="left:3033px;top:673px">↵</p><p class="r2" style="left:3205px;top:673px">↵</p><p class="r2" style="left:3400px;top:673px">↵</p>
<p class="r2" style="left:2679px;top:701px">↵</p><p class="r2" style="left:2824px;top:701px">↵</p><p class="r2" style="left:2930px;top:701px">↵</p><p class="r2" style="left:3033px;top:701px">↵</p><p class="r2" style="left:3205px;top:701px">↵</p><p class="r2" style="left:3400px;top:701px">↵</p>
<p class="r2" style="left:2679px;top:730px">↵</p><p class="r2" style="left:2824px;top:730px">↵</p><p class="r2" style="left:2930px;top:730px">↵</p><p class="r2" style="left:3033px;top:730px">↵</p><p class="r2" style="left:3205px;top:730px">↵</p><p class="r2" style="left:3400px;top:730px">↵</p>
<p class="e" style="left:2543px;top:761px">表后资料顺序：<em>↵</em></p>
<p class="e" style="left:2587px;top:791px">序号1的有效合同、增值税发票扫描件。<em>↵</em></p>
<p class="e" style="left:2587px;top:823px">序号2 的有效合同、增值税发票扫描件。<em>↵</em></p>
<svg class="a" width="3805" height="1074"><path fill="none" stroke="#2a6fd6" stroke-width="1.200" stroke-dasharray="2 1" d="M2864 579.500H2932M3359 638.500H3427"/><rect x="2484" y="539" width="1049" height="310" fill="none" stroke="#cc1528" stroke-width="3.800"/></svg>
<p class="e" style="left:2977px;top:854px">业绩汇总<em>↵</em></p>
<p class="e" style="left:2528px;top:884px">序号<em>↵</em></p><p class="e" style="left:2605px;top:899px">项目名称<em>↵</em></p><p class="e" style="left:2726px;top:899px">合同编号<em>↵</em></p><p class="e sp" style="left:2840px;top:883px">合同金额</p><p class="e sp" style="left:2833px;top:913px">（万元）<em>↵</em></p><p class="e sp" style="left:2960px;top:883px">发票开具金</p><p class="e sp" style="left:2960px;top:913px">额（万元）<em>↵</em></p><p class="e" style="left:3100px;top:899px">发票代码<em>↵</em></p><p class="e" style="left:3214px;top:899px">发票号码<em>↵</em></p><p class="e sp" style="left:3334px;top:883px">收款方纳税人</p><p class="e" style="left:3334px;top:913px">识别号<em>↵</em></p>
<p class="e" style="left:2550px;top:943px">1<em>↵</em></p><p class="e" style="left:2550px;top:982px">2<em>↵</em></p>
<p class="r2" style="left:2598px;top:943px">↵</p><p class="r2" style="left:2719px;top:943px">↵</p><p class="r2" style="left:2834px;top:943px">↵</p><p class="r2" style="left:2953px;top:943px">↵</p><p class="r2" style="left:3094px;top:943px">↵</p><p class="r2" style="left:3208px;top:943px">↵</p><p class="r2" style="left:3327px;top:943px">↵</p>
<p class="r2" style="left:2598px;top:983px">↵</p><p class="r2" style="left:2719px;top:983px">↵</p><p class="r2" style="left:2834px;top:983px">↵</p><p class="r2" style="left:2953px;top:983px">↵</p><p class="r2" style="left:3094px;top:983px">↵</p><p class="r2" style="left:3208px;top:983px">↵</p><p class="r2" style="left:3327px;top:983px">↵</p>
</div>

<div style="position:absolute;left:0;top:156px;width:344px;height:859px;background:#e6e6e6;border-right:1px solid #bdbdbd"></div>
<div class="box" style="left:8px;top:213px;width:317px;height:24px;border-width:1.500px"></div>
<div style="position:absolute;left:8px;top:279px;width:26px;height:2px;background:#2b579a"></div>
<p class="u" style="left:9px;top:171px;font-size:20px;line-height:24px;transform:scaleX(1)">导航</p>
<p class="u gy" style="left:15px;top:216px">在文档中搜索</p>
<p class="u bl" style="left:9px;top:255px;font-weight:bold">标题</p><p class="u" style="left:58px;top:255px">页面</p><p class="u" style="left:107px;top:255px">结果</p>
<div style="position:absolute;left:24px;top:978px;width:288px;height:20px;background:#c0d4f0"></div>
<svg class="a" width="340" height="1074"><path fill="#444" d="M13 739h7v-7z"/></svg>
<p class="n" style="left:29px;top:391px">第八章  合同条款及格式</p><p class="n" style="left:29px;top:412px">14.1本项目合同类型：服务合同。</p><p class="n" style="left:29px;top:433px">14.2付款条件与方式： （1）若中标人为中小微企业...</p>
<p class="n" style="left:29px;top:727px">第九章  投标文件格式</p>
<p class="n" style="left:29px;top:769px">一、投 标 函</p><p class="n" style="left:29px;top:790px">二、法定代表人身份证明</p><p class="n" style="left:29px;top:811px">三、授权委托书</p><p class="n" style="left:29px;top:832px">四、投标保证金</p><p class="n" style="left:29px;top:853px">五、投标报价书</p><p class="n" style="left:29px;top:874px">六、服务方案</p><p class="n" style="left:29px;top:895px">七、资格审查资料</p><p class="n" style="left:29px;top:916px">八、项目组织管理机构</p><p class="n" style="left:29px;top:937px">九、机密信息接受承诺函</p><p class="n" style="left:29px;top:958px">十、其他材料</p>

<div class="bar"></div><div class="rb"></div><div class="tab"></div>
<div class="gl"></div><div class="sc"></div>
<div class="sel" style="left:541px;top:103px;width:22px;height:23px"></div>
<svg class="a" width="1920" height="155"><use href="#ri"/>
<circle cx="1785" cy="82" r="5" fill="#c8c8c8"/>
<path fill="none" stroke="#fff" stroke-width="1.500" d="M16 7.500h14v14H16zM19 8v5h8V8M19 21v-5h8v5"/>
<path fill="none" stroke="#fff" stroke-width="2" d="M50 8l-3 3 3 3M47 11h7c4 0 4 8-2 9"/><path fill="none" stroke="#9ab2d4" d="M67 11l2 2 2-2"/><path fill="none" stroke="#6f8ebb" stroke-width="1.500" d="M94 8l-3 3 3 3M92 11a6 6 0 1 1-4 0"/><path fill="none" stroke="#fff" d="M117 11h5M117 13l2.500 2.500 2.500-2.500"/></svg>
<p class="u tt s13" style="left:780px;top:6px;transform:scaleX(.98)">招标文件-工程安装第二项目部劳务服务.doc [兼容模式]  -  Word</p>
<p class="u w" style="left:11px;top:36px">文件</p><p class="u bl" style="left:67px;top:36px">开始</p><p class="u w" style="left:118px;top:36px">插入</p><p class="u w" style="left:169px;top:36px">设计</p><p class="u w" style="left:219px;top:36px">布局</p><p class="u w" style="left:271px;top:36px">引用</p><p class="u w" style="left:322px;top:36px">邮件</p><p class="u w" style="left:373px;top:36px">审阅</p><p class="u w" style="left:424px;top:36px">视图</p><p class="u w" style="left:475px;top:36px">帮助</p><p class="u w" style="left:526px;top:36px">Acrobat</p><p class="u w" style="left:628px;top:36px">操作说明搜索</p>
<div style="position:absolute;left:1675px;top:4px;width:45px;height:19px;background:#9bb0cf;border-radius:1px"></div><p class="u bl" style="left:1685px;top:6px">登录</p>
<p class="u w s13" style="left:1859px;top:38px;font-weight:bold;transform:scaleX(1)">共享</p>
<p class="u" style="left:11px;top:100px">粘贴</p><p class="u dm" style="left:65px;top:68px">剪切</p><p class="u dm" style="left:65px;top:91px">复制</p><p class="u" style="left:65px;top:114px">格式刷</p><p class="u" style="left:29px;top:137px">剪贴板</p>
<div class="box" style="left:125px;top:72px;width:107px;height:23px"></div><div class="box" style="left:234px;top:72px;width:47px;height:23px"></div>
<svg class="a" width="300" height="100"><path fill="#555" d="M222 82h5l-2.500 3zM271 82h5l-2.500 3z"/></svg>
<p class="u" style="left:127px;top:75px">宋体</p><p class="u" style="left:236px;top:75px">五号</p>
<p class="k" style="left:289px;top:75px;font-size:17px">A</p><p class="k" style="left:313px;top:77px;font-size:14px">A</p><p class="k" style="left:341px;top:76px;font-size:14px">Aa</p><p class="k" style="left:387px;top:74px;font-size:14px">A</p><p class="k" style="left:411px;top:72px;font-size:9px">wén</p><p class="k" style="left:414px;top:82px;font-size:11px;color:#2b6fb3">文</p><p class="k" style="left:437px;top:75px;font-size:15px;color:#2b579a">A</p>
<p class="k" style="left:130px;top:106px;font-size:15px;font-weight:bold">B</p><p class="k" style="left:156px;top:106px;font:italic 15px/16px 'Liberation Serif',serif">I</p><p class="k" style="left:179px;top:106px;font-size:15px;text-decoration:underline">U</p><p class="k" style="left:214px;top:107px;font-size:12px;text-decoration:line-through">abc</p><p class="k" style="left:240px;top:107px;font-size:14px;font-weight:bold">x<span style="font-size:7px">₂</span></p><p class="k" style="left:265px;top:107px;font-size:14px;font-weight:bold">x<span style="font-size:7px;vertical-align:4px">2</span></p>
<p class="k" style="left:296px;top:105px;font-size:19px;color:#c4c4c4">A</p><p class="k" style="left:333px;top:102px;font-size:10px">ab</p><p class="k" style="left:373px;top:103px;font-size:17px">A</p><p class="k" style="left:412px;top:105px;font-size:16px">A</p><p class="k" style="left:437px;top:106px;font-size:9px">字</p>
<p class="u" style="left:268px;top:137px">字体</p><p class="u" style="left:586px;top:137px">段落</p><p class="u" style="left:1187px;top:137px">样式</p><p class="u" style="left:1698px;top:137px">编辑</p><p class="u" style="left:1766px;top:137px">加载项</p>
<p class="g gb" style="left:771px;font-size:29px;width:59px;top:72px;height:30px;line-height:30px">AaB</p><p class="g" style="left:842px;font-size:24px;width:60px;top:74px;line-height:30px;height:30px">AaBb</p><p class="g gb" style="left:915px">AaBbC</p><p class="g" style="left:986px;font:16px/26px 'Liberation Sans',sans-serif">AaBbCc</p><p class="g gb" style="left:1058px;font-size:19px;width:58px">AaBbC</p>
<p class="g" style="left:1130px;font-size:27px;font-weight:bold;top:72px;height:32px;line-height:32px">2 &nbsp;Aa</p><p class="g gb" style="left:1203px;font-size:20px;width:58px">2.1 &nbsp;A</p><p class="g gb" style="left:1275px;font-size:17px;width:58px">2.1.1 &nbsp;A</p><p class="g gb" style="left:1346px;font-size:19px">2.1.1.1</p><p class="g gb" style="left:1419px;font-size:15px">2.1.1.1.</p><p class="g gb" style="left:1490px;font-size:14px">2.1.1.1.1</p><p class="g gb" style="left:1562px;font-size:13px">2.1.1.1.1.</p>
<p class="u gy" style="left:771px;top:104px">↲ Deed_...</p><p class="u gy" style="left:841px;top:104px">↲ Deed_S...</p><p class="u gy" style="left:914px;top:104px">↲ Deed_T...</p><p class="u gy" style="left:990px;top:104px">↲ K&amp;W...</p><p class="u gy" style="left:1076px;top:104px">标题</p><p class="u gy" style="left:1142px;top:104px">标题 1</p><p class="u gy" style="left:1214px;top:104px">标题 2</p><p class="u gy" style="left:1286px;top:104px">标题 3</p><p class="u gy" style="left:1358px;top:104px">标题 4</p><p class="u gy" style="left:1430px;top:104px">标题 5</p><p class="u gy" style="left:1502px;top:104px">标题 6</p><p class="u gy" style="left:1574px;top:104px">标题 7</p>
<p class="u" style="left:1694px;top:68px">查找</p><p class="u" style="left:1694px;top:91px">替换</p><p class="u" style="left:1694px;top:114px">选择</p>
<p class="k" style="left:1677px;top:86px;font-size:10px;line-height:9px;color:#2b6fb3">ab<br>ac</p>
<p class="u dm" style="left:1779px;top:100px">加</p><p class="u dm" style="left:1773px;top:115px">载项</p>

<div class="st"></div>
<p class="u" style="left:6px;top:1018px">第 57 页, 共 52 页</p><p class="u" style="left:130px;top:1018px">31455 个字</p><p class="u" style="left:243px;top:1018px">简体中文(中国大陆)</p><p class="u" style="left:364px;top:1018px">修订: 关闭</p><p class="u" style="left:457px;top:1018px">辅助功能: 不可用</p>
<svg class="a" width="1920" height="1074"><path fill="none" stroke="#666" d="M215 1020h7v13h-7zM222 1020h5M225 1023l4 5m0-5l-4 5M441 1022a8 8 0 0 0 0 10"/><path stroke="#444" stroke-width="1.500" d="M447 1024l9 11m0-11l-9 11"/><rect x="1784" y="1016" width="41" height="21" fill="#c6c6c6"/><path fill="none" stroke="#555" d="M1760 1021h9v12h-9zM1764.500 1021v12M1799 1022h11M1799 1025h11M1799 1028h11M1799 1031h11M1840 1021h7v12h-7zM1847 1024h4v7h-4"/></svg>
<p class="u" style="left:1873px;top:1018px">160%</p>
<div class="tk"></div>
<svg class="a" style="left:-7px;top:1037px" width="1300" height="37"><use href="#tb"/></svg>
<p class="ck" style="left:1853px;top:1040px">17:11</p><p class="ck" style="left:1850px;top:1061px">2025-08-28</p>
</div>
</body></html>
